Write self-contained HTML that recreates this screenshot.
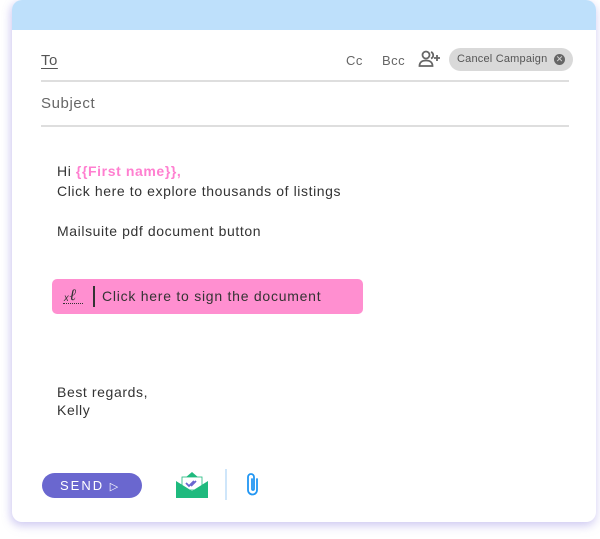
<!DOCTYPE html>
<html><head><meta charset="utf-8"><style>
*{box-sizing:border-box;margin:0;padding:0}
body{width:600px;height:539px;background:#fff;font-family:"Liberation Sans",sans-serif;position:relative;overflow:hidden}
.card{position:absolute;left:12px;top:0;width:584px;height:522px;background:#fff;border-radius:10px;box-shadow:0 4px 10px rgba(160,150,230,.35),-2px 2px 8px rgba(160,150,230,.25);overflow:hidden}
.hdr{height:30px;background:#bee0fb}
.abs{position:absolute}
.line{position:absolute;left:29px;width:528px;height:2px;background:#dedede}
.t{color:#333;font-size:14px;letter-spacing:0.6px}
</style></head><body>
<div class="card">
<div class="hdr"></div>
<div class="abs" style="left:29px;top:52px;font-size:15px;color:#555;text-decoration:underline;text-underline-offset:3px;letter-spacing:.5px">To</div>
<div class="abs" style="left:334px;top:53px;font-size:13px;color:#666;letter-spacing:.5px">Cc</div>
<div class="abs" style="left:370px;top:53px;font-size:13px;color:#666;letter-spacing:.5px">Bcc</div>
<svg class="abs" style="left:406px;top:49px" width="24" height="20" viewBox="0 0 24 20" fill="none" stroke="#666" stroke-width="1.8"><circle cx="8" cy="6" r="3.5"/><path d="M1.5 17c0-4 3-5.5 6.5-5.5s6.5 1.5 6.5 5.5z"/><path d="M13 3a3.5 3.5 0 0 1 0 6.5"/><path d="M19 6v6M16 9h6"/></svg>
<div class="abs" style="left:437px;top:48px;width:124px;height:23px;border-radius:12px;background:#d9d9d9;font-size:11px;color:#555;line-height:23px;padding-left:8px;letter-spacing:.2px">Cancel Campaign<span style="position:absolute;right:8px;top:6px;width:11px;height:11px;border-radius:50%;background:#666;color:#d9d9d9;font-size:9px;line-height:11px;text-align:center;letter-spacing:0">✕</span></div>
<div class="line" style="top:80px"></div>
<div class="abs" style="left:29px;top:95px;font-size:15px;color:#666;letter-spacing:.6px">Subject</div>
<div class="line" style="top:125px"></div>
<div class="abs t" style="left:45px;top:163px">Hi <span style="color:#ff7fd0;font-weight:600">{{First name}},</span></div>
<div class="abs t" style="left:45px;top:183px">Click here to explore thousands of listings</div>
<div class="abs t" style="left:45px;top:223px">Mailsuite pdf document button</div>
<div class="abs" style="left:40px;top:279px;width:311px;height:35px;border-radius:5px;background:#ff8fd0"></div>
<div class="abs" style="left:52px;top:287px;font-size:14px;color:#333;font-style:italic">ₓ<span style="font-family:'Liberation Serif';font-size:16px">ℓ</span></div>
<div class="abs" style="left:51px;top:303px;width:20px;border-top:1px dotted #333"></div>
<div class="abs" style="left:81px;top:286px;width:1.5px;height:21px;background:#333"></div>
<div class="abs t" style="left:90px;top:288px;letter-spacing:.75px">Click here to sign the document</div>
<div class="abs t" style="left:45px;top:384px">Best regards,</div>
<div class="abs t" style="left:45px;top:402px">Kelly</div>
<div class="abs" style="left:30px;top:473px;width:100px;height:25px;border-radius:13px;background:#6a67cf;color:#fff;font-size:13px;letter-spacing:2px;line-height:25px;padding-left:18px">SEND <span style="font-size:11px">▷</span></div>
<svg class="abs" style="left:164px;top:472px" width="32" height="26" viewBox="0 0 32 26"><path d="M16 0l7 6H9z" fill="#1fba7e"/><rect x="6" y="5" width="20" height="13" fill="#fff" stroke="#1fba7e" stroke-width="0.8"/><path d="M0 9l16 10L32 9v17H0z" fill="#1fba7e"/><path d="M10 11l3 3 5-5M15 14l5-5" stroke="#6a67cf" stroke-width="1.8" fill="none"/></svg>
<div class="abs" style="left:213px;top:469px;width:2px;height:31px;background:#cfe6fa"></div>
<svg class="abs" style="left:232px;top:472px" width="18" height="26" viewBox="0 0 18 26" fill="none" stroke="#2196f3" stroke-width="1.8" stroke-linecap="round"><path d="M13 7v11a4.5 4.5 0 0 1-9 0V5a3 3 0 0 1 6 0v12a1 1 0 0 1-2 0V7"/></svg>
</div>
</body></html>
